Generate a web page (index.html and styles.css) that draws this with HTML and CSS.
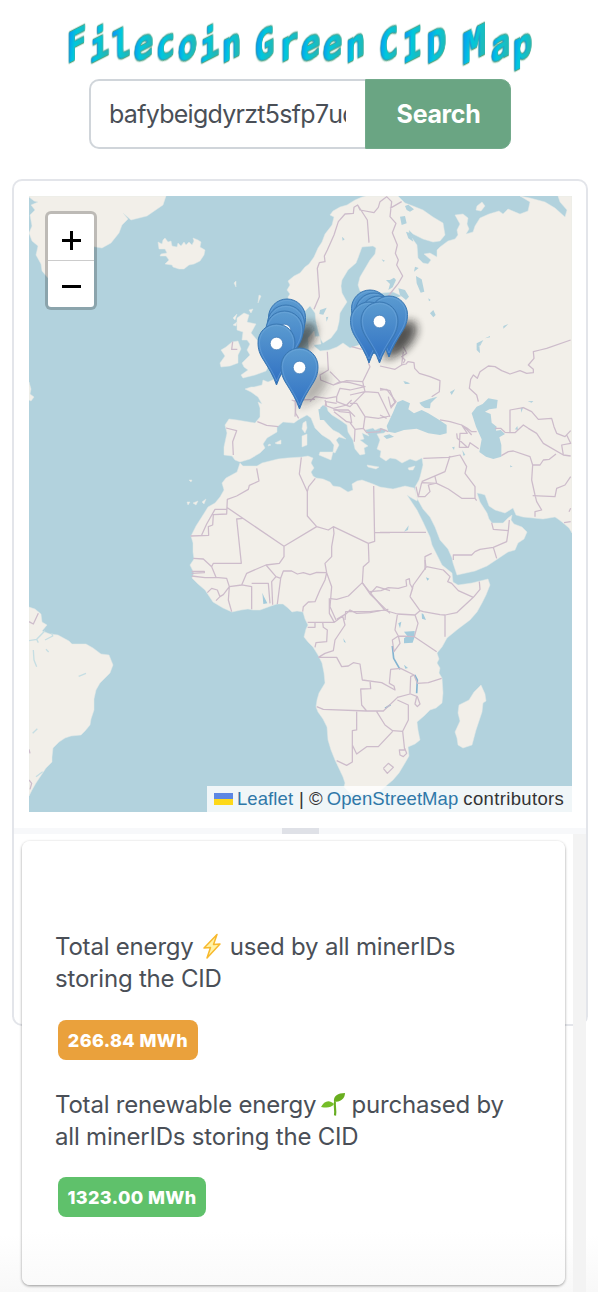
FILE: index.html
```html
<!DOCTYPE html>
<html lang="en">
<head>
<meta charset="utf-8">
<title>Filecoin Green CID Map</title>
<link rel="stylesheet" href="styles.css">
</head>
<body>
<h1 class="title" aria-label="Filecoin Green CID Map"><span class="f">F</span><span>i</span><span class="l">l</span><span>e</span><span>c</span><span>o</span><span>i</span><span>n</span><span class="gap">&nbsp;</span><span class="cap">G</span><span>r</span><span>e</span><span>e</span><span>n</span><span class="gap">&nbsp;</span><span class="cap">C</span><span class="cap">I</span><span class="cap">D</span><span class="gap">&nbsp;</span><span class="wide">M</span><span>a</span><span>p</span></h1>
<form class="search">
  <div class="field"><span class="value">bafybeigdyrzt5sfp7ud</span></div>
  <button class="go" type="button">Search</button>
</form>
<main class="card">
  <section class="map">
    <svg class="world" viewBox="29 196 543 616" width="543" height="616">
      <defs>
        <linearGradient id="pinfill" x1="0" y1="0" x2="0" y2="1"><stop offset="0" stop-color="#5b9bd0"/><stop offset="1" stop-color="#2f70c3"/></linearGradient>
        <filter id="soft" x="-60%" y="-60%" width="220%" height="220%"><feGaussianBlur stdDeviation="4.500"/></filter>
        <g id="pin">
          <path d="M0 0C-3-9-8-17-13-25C-17-31-18.500-36-18.500-42.500A18.500 18.500 0 0 1 18.500-42.500C18.500-36 17-31 13-25C8-17 3-9 0 0Z" fill="url(#pinfill)" stroke="#3a77b2" stroke-width="1"/>
          <path d="M0-4C-3-12-8-19-12-26C-15-31-17-36-17-42.500A17 17 0 0 1 17-42.500C17-36 15-31 12-26C8-19 3-12 0-4Z" fill="none" stroke="#78aee0" stroke-opacity=".45" stroke-width="1"/>
          <circle cy="-41.500" r="6.300" fill="#fff" stroke="#3b77b5" stroke-width=".7"/>
        </g>
        <path id="shade" d="M0 0L3-13C7-28 15-40 25-38C34-34 28-19 17-10Z" fill="#222" fill-opacity=".5" filter="url(#soft)"/>
      </defs>
      <rect x="29" y="196" width="543" height="616" fill="#b2d2dd"/>
      <g class="land">
        <!-- Africa -->
        <path d="M240 463L243 466L248 466L257 466L262 463L270 461L278 459L287 458L302 457L308 456L313 458L311 463L314 468L311 472L313 476L316 478L323 479L330 482L333 486L340 487L348 492L353 490L352 484L357 481L362 480L373 484L380 487L393 489L405 486L414 488L418 497L417 501L410 497L407 495L413 504L417 510L423 522L430 537L432 545L438 557L442 565L452 573L453 582L458 585L472 583L488 579L490 585L486 595L482 603L477 612L470 620L458 629L447 638L442 647L437 653L439 659L437 663L440 668L439 673L442 678L443 693L442 703L436 708L430 710L424 716L417 722L418 730L420 740L415 744L408 747L409 756L405 763L399 773L393 780L380 791L369 794L358 794L350 793L344 787L345 783L343 777L335 760L331 750L328 740L327 727L323 719L318 712L316 707L317 700L319 693L325 683L324 673L322 663L318 655L313 647L308 642L304 637L306 629L308 625L305 619L303 612L297 611L292 612L288 608L283 604L277 604L271 606L260 610L253 610L248 609L241 610L232 612L223 608L213 602L209 596L205 590L198 584L192 578L194 573L190 565L194 559L193 552L193 543L191 536L196 526L203 515L208 507L215 503L220 497L224 490L222 483L226 478L237 472Z"/>
        <!-- Europe and Asia -->
        <path d="M240 462L235 460L232 456L224 455L224 447L227 433L225 425L229 419L237 420L255 423L260 417L260 408L258 402L262 404L258 397L251 392L245 389L251 387L254 387L262 385L263 380L268 382L277 378L285 372L290 362L296 358L303 357L309 350L308 338L314 331L315 337L314 346L320 351L329 350L337 347L343 343L350 348L359 345L362 334L372 322L382 316L390 300L402 296L393 292L370 294L360 291L358 285L360 277L370 260L375 254L376 248L373 246L362 247L358 258L356 263L348 270L342 280L341 286L342 293L347 302L343 308L340 313L339 322L337 330L331 338L323 343L320 338L318 330L316 322L315 313L310 306L305 311L297 314L290 309L289 302L288 297L290 294L287 290L290 285L288 281L294 276L300 273L305 267L309 264L314 257L318 248L322 242L325 234L332 225L334 217L330 215L333 211L340 207L347 205L355 200L362 197L366 196L398 196L405 203L413 206L423 210L433 217L443 223L445 235L440 241L433 242L423 239L413 234L409 230L409 234L417 245L418 258L423 263L428 264L431 260L424 254L430 253L437 257L437 250L440 247L448 241L455 239L458 235L457 230L460 224L455 215L463 214L468 218L467 224L469 229L466 234L473 232L475 226L480 218L489 214L499 211L503 214L508 209L520 214L528 211L530 202L520 196L530 198L545 202L555 208L565 217L567 210L560 202L558 196L572 196L572 533L569 528L562 522L558 519L555 517L543 519L523 517L516 515L513 508L505 513L495 510L489 506L485 495L482 494L477 493L480 502L487 513L489 519L492 523L503 523L508 518L512 515L511 520L514 524L522 527L527 532L524 539L518 543L515 550L508 552L493 562L487 566L475 571L457 575L453 563L452 558L448 549L440 540L435 527L430 517L423 509L418 500L416 496L415 487L419 480L420 477L423 465L422 458L416 461L410 459L402 463L396 459L390 458L386 461L380 457L381 451L377 449L380 440L377 434L384 433L387 430L380 428L375 430L373 428L365 430L369 436L362 433L364 439L360 440L368 446L364 448L365 454L360 455L355 449L353 440L348 432L347 425L340 420L332 415L328 411L327 407L323 405L320 408L322 418L328 425L333 430L339 433L346 439L339 437L336 440L339 445L335 453L333 452L334 445L330 440L322 435L315 428L311 418L307 415L298 420L294 423L283 422L277 427L277 432L267 438L263 444L265 448L260 453L250 459Z"/>
        <!-- Greenland, Iceland, islands -->
        <path d="M29 197L34 201L38 202L31 205L35 210L30 215L32 226L29 233L32 241L38 246L36 255L41 264L42 271L48 278L75 274L90 246L102 248L111 243L119 233L122 225L128 219L123 213L131 220L147 216L163 205L166 196L29 196Z"/>
        <path d="M158 242L162 244L163 240L165 238L168 242L171 241L172 246L177 247L178 243L181 246L184 242L186 245L189 242L192 245L194 241L193 238L198 240L201 242L200 247L205 250L204 255L200 261L194 264L189 265L184 269L179 269L173 267L172 265L165 264L169 260L166 256L160 256L161 254L167 253L165 249L159 249Z"/>
        <path d="M237 318L244 313L249 315L247 322L256 324L251 333L258 341L260 350L268 357L269 365L266 371L255 375L243 378L241 375L248 370L244 367L242 363L250 355L247 350L250 344L247 340L242 340L243 332L237 330Z"/>
        <path d="M232 342L238 341L241 349L238 355L238 363L230 366L221 367L220 363L225 356L221 350L226 347Z"/>
        <path d="M303 423L306 421L307 428L305 433L302 429ZM302 436L307 434L307 445L302 447ZM320 452L333 452L331 460L319 455ZM367 465L379 467L376 469L368 467ZM408 468L415 466L413 470L409 470ZM275 443L281 440L281 444L277 444ZM269 444L271 445L268 446ZM234 283L236 281L236 287ZM259 295L261 296L258 303ZM313 337L320 336L321 344L314 345ZM310 346L313 343L314 348ZM477 206L482 202L485 206L481 211L476 210ZM187 502L190 502L188 505ZM193 503L198 501L196 505ZM202 502L206 499L204 504ZM189 480L192 480L191 482ZM233 318L237 314L235 320ZM233 325L237 322L236 326ZM249 310L253 309L251 313Z"/>
        <path d="M481 685L485 694L486 701L483 703L482 712L476 730L472 745L463 748L458 745L457 738L455 732L460 721L458 713L459 705L469 700L474 692Z"/>
        <!-- South America -->
        <path d="M29 607L35 609L41 614L42 622L47 625L42 631L50 634L58 635L69 641L72 644L86 644L93 648L101 654L109 655L113 665L110 673L100 683L96 690L94 699L94 710L91 719L90 725L85 731L81 735L71 736L65 738L59 742L53 748L52 757L52 762L46 768L40 777L36 783L32 790L29 796Z"/>
        <path d="M29 382L31 389L30 394L34 397L31 401L29 400Z"/>
      </g>
      <!-- inland seas, gulfs and lakes -->
      <g class="water" transform="translate(380 340) scale(.33333)">
        <path d="M20 258L38 220L52 187L68 180L90 190L85 208L102 220L125 210L145 220L178 240L200 255L200 280L180 285L145 280L110 266L72 270L45 279L25 275ZM118 188L150 176L172 170L152 190L150 205L135 204L125 197Z"/>
        <path d="M275 220L290 200L308 192L325 175L353 180L350 205L328 208L315 215L332 222L335 248L350 260L348 272L362 270L375 282L358 292L364 315L364 350L340 357L318 350L298 336L305 298L288 260Z"/>
        <path d="M10 288L28 283L42 290L20 297ZM216 322L224 320L222 330ZM247 330L256 345L250 347ZM405 268L412 258L414 270ZM422 205L430 200L424 218ZM443 184L460 183L455 188ZM290 20L300 18L310 0L298 15L300 40ZM75 124L90 130L80 132ZM212 158L225 148L215 162ZM390 376L398 380L391 382ZM72 575L86 556L84 570Z"/>
      </g>
      <g class="water" transform="translate(290 180) scale(.33333)">
        <path d="M325 325L345 330L357 350L348 360L330 345ZM378 288L395 298L403 335L392 338L380 310ZM288 300L300 300L312 293L318 300L308 322L295 330L300 312ZM415 355L422 360L417 364ZM420 400L430 390L437 405L430 412ZM375 260L386 264L372 275ZM90 390L110 383L100 404L88 402ZM108 412L115 410L110 425ZM275 238L285 242L280 245ZM560 490L580 480L565 500L570 520L560 510ZM585 475L600 468L600 472ZM640 438L655 432L640 446ZM480 636L495 628L485 645ZM340 602L360 612L345 612ZM345 78L355 74L372 88L360 95L350 90ZM330 110L345 108L350 130L335 135ZM348 155L362 160L370 185L355 175ZM156 170L164 178L158 182ZM85 688L105 684L118 704L140 720L90 720Z"/>
      </g>
      <g class="lake" transform="translate(180 560) scale(.33333)">
        <path d="M672 215L704 213L704 230L698 248L672 250L672 235L682 228ZM738 52L748 56L742 62ZM725 160L730 162L738 180L726 176ZM247 98L252 110L262 130L250 132ZM655 190L664 185L660 205ZM490 235L498 248L492 246ZM672 314L684 324L676 326Z"/>
      </g>
      <g class="lakeline" transform="translate(180 560) scale(.33333)">
        <path d="M637 258L641 295L660 328M704 345L712 360L710 400M615 445L632 434"/>
      </g>
      <g class="river" transform="translate(0 590) scale(.33333)">
        <path d="M87 152L110 148L135 122M135 150L158 138L155 130M110 148L115 158M100 180L102 210L110 230M138 178L146 186M236 259L258 250M98 430L112 416M108 560L128 545"/>
      </g>
      <!-- country borders -->
      <g class="borders">
        <g transform="translate(170 400) scale(.33333)"><path d="M168 84L200 92L188 125L190 165M262 65L290 76L325 80M375 0L377 40L386 55M260 205L267 243L238 256L235 268L200 288L172 298L170 342L130 344L128 375L115 380L116 406L62 408M170 328L135 328L110 372L95 405M172 323L342 439L440 380L412 348L412 275L388 222L394 172M412 275L416 260L436 235M440 380L475 390L490 380L595 430L614 424L611 258M614 398L660 398M342 439L342 470L328 490L288 495L230 520L215 555L178 560L170 535L138 532L125 500L130 490L214 490L200 357L218 355M70 475L100 477L125 500M65 514L103 514L103 518L65 520M65 528L105 533L138 532M112 578L125 565L142 570L150 590L138 602M150 590L160 584L178 560M178 560L175 600L185 635M215 555L245 560L245 628M245 550L295 550L300 610M288 495L318 530L305 545L308 614M318 530L332 535L322 612M332 535L340 513L365 513L382 522L400 518L420 524L440 517L470 518L465 540L450 570L435 605L415 606L400 620L398 635M490 380L492 400L485 440L485 470L465 490L470 518L485 560L480 620L498 660M595 430L597 485L580 500L577 548L600 582L660 640M480 596L500 598L535 588L577 548M600 582L620 560L660 572M525 660L527 635L600 635L655 628M465 0L470 18L490 25L530 15L545 0M490 25L510 35L540 38L545 68L530 65L492 35M540 10L560 10L585 50L580 85L555 88L540 68M585 50L625 55L660 48M555 88L553 125M580 85L590 98L630 95L632 86L655 95"/></g>
        <g transform="translate(180 560) scale(.33333)"><path d="M383 187L463 187L448 160L448 115M463 187L488 168L495 195L465 240L460 272L435 280L415 292M405 187L405 202L383 202M428 187L430 202L442 210L440 245L408 248L405 262M470 178L500 160L510 150L530 160L570 158L612 150L652 162L705 165L720 152L690 110L698 85L690 72L688 56L678 60L680 78L655 85L625 83L603 92L570 95M548 70L568 95L614 150M735 0L738 22L700 75L690 110M740 20L790 30L810 50L803 65L815 70L835 92L880 112L830 158L795 165L780 164L730 155L720 152M898 65L900 88L880 112M795 165L795 230M705 165L714 190L703 230L770 275M703 230L655 228L645 210L652 165M655 228L660 250L642 275L637 240L655 228M415 292L470 292L485 320L505 318L520 308L540 312L547 360L605 368L645 390L642 378L628 370L632 328L662 325L702 345L692 350L690 402L652 412M570 362L572 386L542 387L545 435L560 453M410 440L430 448L560 453L610 453L655 410M702 345L712 370L745 368L785 355M692 402L712 410L720 432L712 440L705 432L710 410M652 420L685 435L685 480L668 514L638 512L615 495L590 455M668 514L674 570L658 570L660 585L670 590L680 580L674 565M530 455L530 510L517 512L517 606L500 616L470 602M517 555L530 582L560 560L595 560L638 514M610 625L625 610L640 622L622 640L610 625"/></g>
        <g transform="translate(380 340) scale(.33333)"><path d="M0 78L45 88L65 75L70 35M65 75L78 72L84 65L102 68L104 85L118 100L150 110L180 122L178 155L155 170M295 185L290 165L268 145L272 118L280 105L292 115L300 95L325 78L345 80L365 92L390 102L420 92L440 100L460 98L460 88L445 75L462 55L460 35L480 30L500 25L572 0M345 265L362 265L375 277L390 278L390 210L430 203L455 215L475 238L515 235L522 260L530 280L555 290L572 272M390 278L405 278L430 255L445 265L470 280L490 310L550 345L572 348M550 345L545 315L572 310L560 285M180 240L210 245L245 255L262 265L275 275L290 275M275 285L262 270L245 255L262 280L240 280L238 322L265 322L270 308L296 326M230 280L232 295L262 322M130 355L205 352L240 345L260 380L255 400L285 440L285 475L245 475L205 447L170 430L125 428M210 348L195 395L125 425M170 430L165 410M125 428L115 470L135 470L150 455L145 435L165 430M108 440L115 472M285 475L290 482M364 347L385 335L400 333L450 350L458 375L480 375L490 360L508 358L528 342M458 375L455 420L465 465L470 485L485 510L465 515L465 530M458 467L525 470L530 445L555 435L572 410M335 548L340 568L385 572L388 540M385 572L380 605L340 622L350 655M340 622L300 628L285 635L275 645L220 645L220 660M0 577L138 577M155 640L135 650L135 690M552 548L572 545M572 505L567 515M0 225L20 235M0 145L30 152L45 188L32 205"/></g>
        <g transform="translate(290 180) scale(.33333)"><path d="M72 388L88 350L82 265L88 248L105 245L103 228L112 210L132 165L145 125L165 102L190 100L192 82L203 75L210 90L252 98L265 82L270 65L290 50L305 65L300 110L318 130L307 158L322 195L316 220L325 240L320 255L338 288L325 310L295 348M203 75L232 120L237 188M300 85L335 65M112 515L115 570L90 585L92 600L130 615L150 605L120 575M130 615L170 602L218 605L240 560L235 548M150 605L180 608L225 620L180 630L150 625L140 650L110 655L75 650L60 665M218 605L225 635L265 638L300 710M180 645L225 635L205 655L180 680L140 665L140 650M270 630L290 628L318 665L302 680L295 650M185 500L215 508M340 550L345 540L335 530L350 520L340 500M105 680L108 665L140 670M130 690L175 690L195 710M20 660L75 658"/></g>
        <g transform="translate(10 170) scale(.33333)"><path d="M668 515L665 538L682 538M845 690L858 695L855 740"/></g>
        <g transform="translate(0 590) scale(.33333)"><path d="M87 95L100 102L115 70M87 570L95 580L90 598M87 478L90 490"/></g>
      </g>
      <!-- pins -->
      <use href="#shade" x="287" y="360"/><use href="#shade" x="285" y="366" opacity=".6"/><use href="#shade" x="299" y="409" opacity=".6"/>
      <use href="#shade" x="382" y="361"/><use href="#shade" x="388" y="361" opacity=".7"/><use href="#shade" x="388" y="358" opacity=".7"/>
      <use href="#pin" x="287" y="360"/><use href="#pin" x="286" y="366"/><use href="#pin" x="284.500" y="372"/><use href="#pin" x="276.500" y="385"/><use href="#pin" x="299.500" y="409"/>
      <use href="#pin" x="370" y="351"/><use href="#pin" x="374" y="354"/><use href="#pin" x="379" y="357"/><use href="#pin" x="389" y="357"/><use href="#pin" x="369" y="363"/><use href="#pin" x="379.500" y="363"/>
    </svg>
    <div class="zoom"><span class="plus"></span><span class="minus"></span></div>
    <div class="credit"><i class="flag"></i><a>Leaflet</a><span class="sep">| ©</span><a>OpenStreetMap</a><span>contributors</span></div>
  </section>
  <div class="gutter"><i></i></div>
  <section class="scroller">
    <article class="stats">
      <p>Total energy <svg class="emoji bolt" viewBox="0 0 20 26"><path d="M15 1.500L2 15L8.500 14.500L5 25L18 11L11.500 11.500Z" fill="#fff3a8" stroke="#f8b92d" stroke-width="1.500" stroke-linejoin="round"/></svg> used by all minerIDs<br>storing the CID</p>
      <div class="badge orange"><span>266.84 MWh</span></div>
      <p class="second">Total renewable energy <svg class="emoji leaf" viewBox="0 0 26 26"><path d="M15 24.500C16 18 14 14 15 11" fill="none" stroke="#67ad22" stroke-width="2.200"/><path d="M14 11C13 5 18 2 25 2C25 8 20 11 14 11Z" fill="#69ae1f"/><path d="M14 13C9 8 4 10 1 16C7 17 11 17 14 13Z" fill="#75bd28"/></svg> purchased by<br>all minerIDs storing the CID</p>
      <div class="badge green"><span>1323.00 MWh</span></div>
    </article>
    <div class="track"></div>
  </section>
</main>
</body>
</html>
```
FILE: styles.css
```css
* { box-sizing: border-box; }
html { height: 1292px; overflow: hidden; }
body {
  margin: 0;
  height: 1292px;
  overflow: hidden;
  font-family: Inter, sans-serif;
  color: #4a4f57;
  background: linear-gradient(#fff 1235px, #f8f8f8 1292px);
}
.title {
  display: flex;
  margin: 0 0 0 67px;
  padding-top: 19px;
  height: 79px;
  font: bold 33px/50px "DejaVu Sans Mono", monospace;
}
.title span {
  flex: none;
  width: 22.1px;
  height: 50px;
  color: transparent;
  background: linear-gradient(100deg, #0a8ffa 8%, #00c8dc 38%, #20b9b8 70%, #45a99a 100%);
  -webkit-background-clip: text;
  background-clip: text;
  transform: skewY(-27deg) scaleY(1.24);
  filter: drop-shadow(-1px 0 0 #1597dc) drop-shadow(.5px -1px 0 #4fa68c) drop-shadow(0 1.500px 0 #55a57d);
}
.title .gap { width: 11px; }
.title .f { width: 22.6px; }
.title .cap { width: 24px; }
.title .wide { width: 29px; padding-left: 3px; transform: skewY(-27deg) scale(1.2, 1.28); }
.search {
  display: flex;
  width: 422px;
  height: 70px;
  margin: 0 0 0 89px;
}
.field {
  width: 276px;
  border: 2px solid #d0d5da;
  border-right: 0;
  border-radius: 10px 0 0 10px;
  padding: 0 18px;
  background: #fff;
}
.value {
  display: block;
  width: 237px;
  overflow: hidden;
  font-size: 25px;
  line-height: 67px;
  letter-spacing: -.72px;
  white-space: nowrap;
}
.go {
  flex: 1;
  border: 1px solid #73aa8b;
  border-radius: 0 10px 10px 0;
  padding: 0 5px 0 6px;
  background: #6aa583;
  color: #fff;
  font: bold 25px Inter, sans-serif;
  letter-spacing: -.35px;
}
.card {
  width: 576px;
  height: 847px;
  margin: 30px 0 0 12px;
  border: 2px solid #e3e5ea;
  border-radius: 10px;
  padding-top: 15px;
}
.map { position: relative; width: 543px; height: 616px; margin-left: 15px; overflow: hidden; }
.world { display: block; }
.land { fill: #f2efe9; stroke: #e3e8e6; stroke-width: .5; }
.water, .lake { fill: #b2d2dd; }
.lake { fill: #a3cbdc; }
.lakeline { fill: none; stroke: #83b4d1; stroke-width: 5; }
.river { fill: none; stroke: #c6dee3; stroke-width: 4; }
.borders { fill: none; stroke: #cdbccb; stroke-width: 3.800; stroke-linejoin: round; }
.zoom {
  position: absolute;
  top: 15px;
  left: 16px;
  width: 52px;
  height: 99px;
  border: 3px solid rgba(0,0,0,.22);
  border-radius: 6px;
  background: #fff;
  background-clip: padding-box;
}
.zoom span { display: block; height: 46px; }
.zoom .plus { height: 47px; border-bottom: 1px solid #ccc; }
.plus { background: linear-gradient(#000,#000) 50% 25px/19px 3px no-repeat, linear-gradient(#000,#000) 50% 17px/3px 19px no-repeat; }
.minus { background: linear-gradient(#000,#000) 50% 24px/19px 3px no-repeat; }
.credit {
  position: absolute;
  right: 0;
  bottom: 0;
  display: flex;
  align-items: center;
  width: 365px;
  height: 26px;
  padding-left: 7px;
  background: rgba(255,255,255,.8);
  color: #333;
  font: 18.500px/26px "Liberation Sans", sans-serif;
  white-space: nowrap;
}
.credit a { color: #2f78a8; letter-spacing: .08px; }
.credit a, .credit span { margin-left: 4px; }
.credit .sep { margin-left: 6px; }
.credit span:last-child { margin-left: 5px; letter-spacing: .35px; }
.flag { width: 19px; height: 12px; background: linear-gradient(#4c7be1 50%, #ffd500 50%); opacity: .9; }
.gutter { display: flex; width: 572px; height: 6px; margin-top: 16px; background: #f7f8fa; }
.gutter i { width: 37px; margin-left: 268px; background: #dfe1e7; }
.scroller { display: flex; width: 572px; height: 458px; }
.stats {
  width: 543px;
  height: 444px;
  flex: none;
  margin: 7px 8px 0 8px;
  border-radius: 8px;
  padding: 90px 33px 0;
  background: linear-gradient(#fff 390px, #fafafa);
  box-shadow: 0 1px 3px rgba(0,0,0,.4);
}
.stats p { margin: 0 0 25px; font-size: 24px; line-height: 31.500px; height: 64px; letter-spacing: -.2px; white-space: nowrap; }
.stats .second { margin-top: 29px; margin-bottom: 24px; }
.emoji { vertical-align: -4px; }
.bolt { width: 20px; height: 26px; margin: 0 1px 0 2px; }
.leaf { width: 26px; height: 26px; margin: 0 -1px 0 -3px; }
.badge {
  display: flex;
  align-items: center;
  justify-content: center;
  width: 140px;
  height: 40px;
  margin-left: 3px;
  border-radius: 8px;
  color: #fff;
  font-size: 18px;
  font-weight: 800;
  letter-spacing: .4px;
  white-space: nowrap;
}
.orange { background: #eaa13c; }
.green { width: 148px; background: #5fc16b; }
.track { width: 13px; background: #f3f3f3; }
```
